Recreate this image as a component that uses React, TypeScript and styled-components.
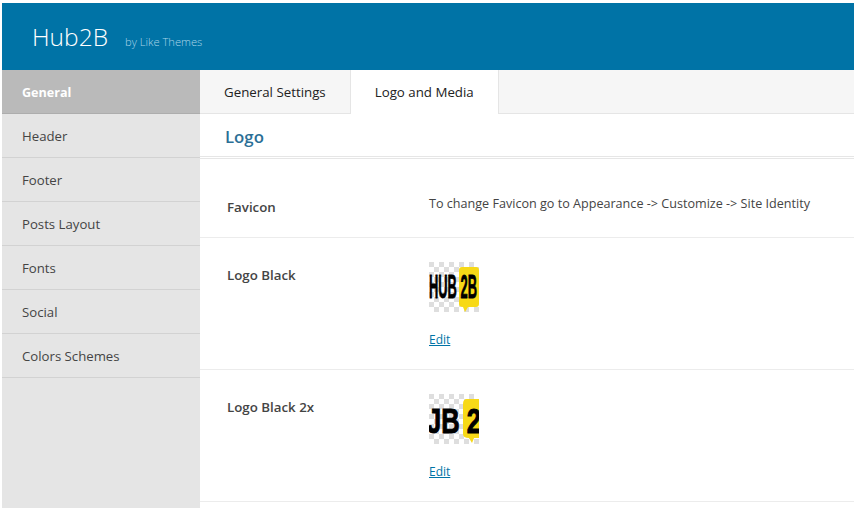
import styled, { createGlobalStyle } from "styled-components";

const GlobalStyle = createGlobalStyle`
  html, body {
    margin: 0;
    padding: 0;
    background: #fff;
    overflow: hidden;
  }
  body {
    font-family: "Open Sans", "Noto Sans", sans-serif;
  }
`;

const menuItems = [
  "General",
  "Header",
  "Footer",
  "Posts Layout",
  "Fonts",
  "Social",
  "Colors Schemes",
];

const Checker = () => (
  <>
    <defs>
      <pattern id="checks" width="10" height="10" patternUnits="userSpaceOnUse">
        <rect width="10" height="10" fill="#fff" />
        <rect width="5" height="5" fill="#dedede" />
        <rect x="5" y="5" width="5" height="5" fill="#dedede" />
      </pattern>
    </defs>
    <rect width="50" height="50" fill="url(#checks)" />
  </>
);

const LogoSmall = () => (
  <svg width="50" height="50" viewBox="0 0 50 50">
    <Checker />
    <path d="M33 5h14q3 0 3 3v34q0 3-3 3h-8l-3 5-2-5q-4 0-4-3V8q0-3 3-3z" fill="#f7d917" />
    <text x="0" y="36" fontFamily="Liberation Sans" fontWeight="700" fontSize="33" textLength="48" lengthAdjust="spacingAndGlyphs" fill="#000" stroke="#000" strokeWidth="0.8">HUB 2B</text>
  </svg>
);

const LogoLarge = () => (
  <svg width="50" height="50" viewBox="0 0 50 50">
    <Checker />
    <path d="M38 5h12v39h-5l-2 5-3-5q-6 0-6-4V10q0-5 4-5z" fill="#f7d917" />
    <text x="-2" y="39" fontFamily="Liberation Sans" fontWeight="700" fontSize="35" textLength="54" lengthAdjust="spacingAndGlyphs" fill="#000" stroke="#000" strokeWidth="1">JB 2</text>
  </svg>
);

const App = () => {
  return (
    <Page>
      <GlobalStyle />
      <Header>
        <Brand>Hub2B</Brand>
        <Byline>by Like Themes</Byline>
      </Header>
      <Body>
        <Sidebar>
          {menuItems.map((item, i) => (
            <MenuItem key={item} $active={i === 0}>
              {item}
            </MenuItem>
          ))}
        </Sidebar>
        <Main>
          <Tabs>
            <Tab>General Settings</Tab>
            <Tab $active>Logo and Media</Tab>
          </Tabs>
          <SectionTitle>Logo</SectionTitle>
          <FaviconRow>
            <Label>Favicon</Label>
            <Hint>To change Favicon go to Appearance -&gt; Customize -&gt; Site Identity</Hint>
          </FaviconRow>
          <LogoRow>
            <Label>Logo Black</Label>
            <Field>
              <LogoSmall />
              <EditLink href="#">Edit</EditLink>
            </Field>
          </LogoRow>
          <LogoRow>
            <Label>Logo Black 2x</Label>
            <Field>
              <LogoLarge />
              <EditLink href="#">Edit</EditLink>
            </Field>
          </LogoRow>
        </Main>
      </Body>
    </Page>
  );
};
export default App;

const Page = styled.div`
  width: 854px;
  height: 508px;
  padding: 3px 0 0 2px;
  box-sizing: border-box;
  overflow: hidden;
`;

const Header = styled.div`
  height: 67px;
  background: #0073a6;
  display: flex;
  align-items: baseline;
  padding-left: 30px;
  box-sizing: border-box;
`;

const Brand = styled.div`
  font-family: "Open Sans", sans-serif;
  font-size: 24.5px;
  font-weight: 300;
  line-height: 67px;
  color: #fff;
`;

const Byline = styled.div`
  font-size: 11.2px;
  font-weight: 300;
  color: #a9d3e6;
  margin-left: 17px;
`;

const Body = styled.div`
  display: flex;
  height: 438px;
`;

const Sidebar = styled.div`
  width: 198px;
  flex: none;
  background: #e5e5e5;
`;

const MenuItem = styled.div<{ $active?: boolean }>`
  height: 44px;
  box-sizing: border-box;
  padding-left: 20px;
  line-height: 45px;
  font-size: ${(p) => (p.$active ? "12.6px" : "13.2px")};
  font-weight: ${(p) => (p.$active ? 700 : 400)};
  color: ${(p) => (p.$active ? "#fff" : "#444")};
  background: ${(p) => (p.$active ? "#bababa" : "transparent")};
  border-bottom: 1px solid ${(p) => (p.$active ? "#adadad" : "#d2d2d2")};
`;

const Main = styled.div`
  flex: 1;
  min-width: 0;
`;

const Tabs = styled.div`
  display: flex;
  height: 44px;
  box-sizing: border-box;
  background: #f6f6f6;
  border-bottom: 1px solid #e5e5e5;
`;

const Tab = styled.div<{ $active?: boolean }>`
  height: 44px;
  box-sizing: border-box;
  line-height: 44px;
  font-size: 13.3px;
  color: #222;
  padding: 0 24px;
  background: ${(p) => (p.$active ? "#fff" : "transparent")};
  ${(p) => p.$active && "border: solid #e5e5e5; border-width: 0 1px;"}
`;

const SectionTitle = styled.div`
  height: 45px;
  box-sizing: border-box;
  padding-left: 25px;
  line-height: 45px;
  font-size: 16.8px;
  font-weight: 600;
  color: #2b6f96;
  border-bottom: 3px double #e6e6e6;
`;

const Row = styled.div`
  display: flex;
  box-sizing: border-box;
  padding-left: 27px;
  border-bottom: 1px solid #ececec;
`;

const FaviconRow = styled(Row)`
  height: 79px;
  padding-top: 35px;
`;

const LogoRow = styled(Row)`
  height: 132px;
  padding-top: 24px;
`;

const Label = styled.div`
  width: 202px;
  flex: none;
  font-size: 13.3px;
  font-weight: 600;
  color: #444;
  line-height: 27px;
`;

const Hint = styled.div`
  font-size: 12.6px;
  color: #444;
  line-height: 19px;
`;

const Field = styled.div`
  display: flex;
  flex-direction: column;
  align-items: flex-start;
`;

const EditLink = styled.a`
  margin-top: 20px;
  font-size: 12px;
  line-height: 16px;
  color: #0073a6;
`;
